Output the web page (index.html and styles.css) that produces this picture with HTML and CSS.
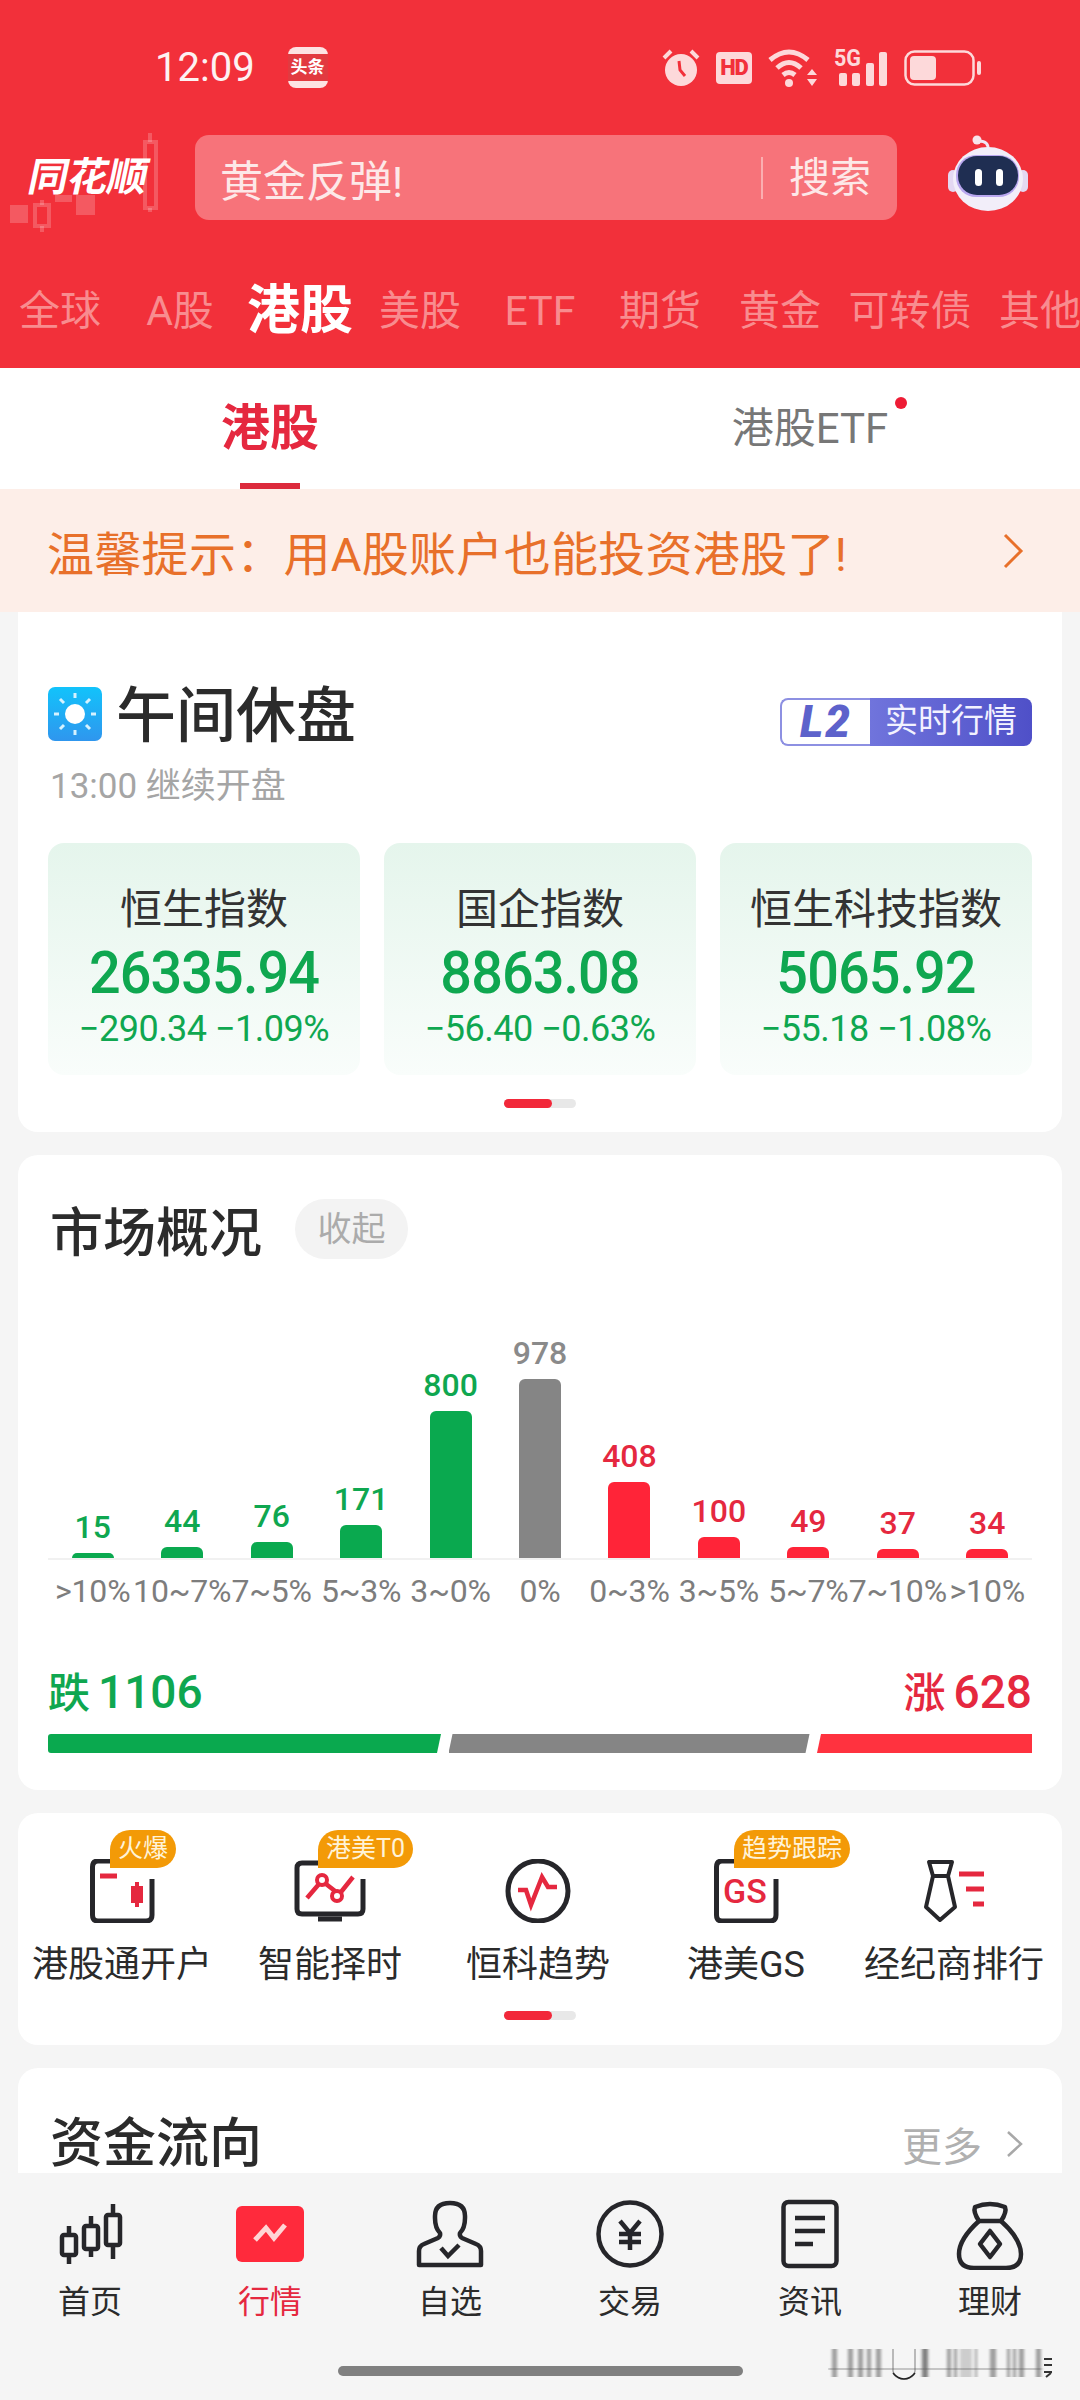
FILE: index.html
```html
<!DOCTYPE html>
<html lang="zh-CN">
<head>
    <meta charset="UTF-8">
    <meta name="viewport" content="width=device-width, initial-scale=1.0">
    <title>同花顺 港股行情</title>
    <link rel="stylesheet" href="styles.css">
</head>
<body>
    <header class="top">
        <div class="status">
            <div class="status-left">
                <span class="clock">12:09</span>
                <span class="toutiao"><span>头条</span></span>
            </div>
            <div class="status-right">
                <svg width="38" height="38" viewBox="0 0 38 38"><path d="M2 9 9 2M36 9 29 2" stroke="#fdd9da" stroke-width="4" fill="none"/><circle cx="19" cy="21" r="16" fill="#fdd9da"/><path d="M17 12 18 21 23 27" stroke="#f2303a" stroke-width="3" fill="none"/></svg>
                <span class="hd">HD</span>
                <svg width="50" height="40" viewBox="0 0 50 40"><path d="M2 12Q21-4 40 12M9 20Q21 9 33 20M15 27Q21 22 27 27" stroke="#fdd9da" stroke-width="5" fill="none"/><circle cx="21" cy="35" r="4" fill="#fdd9da"/><path d="M44 21 49 27H39ZM44 38 39 31H49Z" fill="#fdd9da"/></svg>
                <svg class="signal" width="54" height="38" viewBox="0 0 54 38"><text x="0" y="17" class="fiveg" textLength="27" lengthAdjust="spacingAndGlyphs">5G</text><rect x="5" y="24" width="8" height="13" rx="2" fill="#fdd9da"/><rect x="18" y="24" width="8" height="13" rx="2" fill="#fdd9da"/><rect x="32" y="14" width="8" height="23" rx="2" fill="#fdd9da"/><rect x="45" y="3" width="8" height="34" rx="2" fill="#fdd9da"/></svg>
                <svg width="78" height="36" viewBox="0 0 78 36"><rect x="1.5" y="1.5" width="68" height="33" rx="9" stroke="#fdd9da" stroke-width="2.5" fill="none"/><rect x="6" y="6" width="26" height="24" rx="4" fill="#fdd9da"/><rect x="73" y="11" width="4" height="14" rx="2" fill="#fdd9da"/></svg>
            </div>
        </div>
        <div class="search-row">
            <div class="logo">
                <svg class="logo-bg" width="195" height="110" viewBox="0 0 195 110">
                    <g fill="#fff" fill-opacity=".2">
                        <rect x="10" y="73" width="18" height="18"/>
                        <rect x="55" y="63" width="17" height="7"/>
                        <rect x="76" y="63" width="19" height="20"/>
                    </g>
                    <g stroke="#fff" stroke-opacity=".2" fill="none">
                        <rect x="35" y="73" width="14" height="21" stroke-width="4"/>
                        <path d="M42 68V73M42 94V100" stroke-width="4"/>
                        <rect x="145" y="10" width="11" height="66" stroke-width="4"/>
                        <path d="M150 1V10M150 76V80" stroke-width="4"/>
                    </g>
                </svg>
                <span class="logo-text">同花顺</span>
            </div>
            <div class="search">
                <span class="search-hint">黄金反弹!</span>
                <span class="search-btn">搜索</span>
            </div>
            <svg class="robot" width="80" height="78" viewBox="0 0 80 78">
                <path d="M40 15Q41 6 31 6" stroke="#f0e6f4" stroke-width="3" fill="none"/>
                <circle cx="29" cy="5" r="4.500" fill="#f8e3ea"/>
                <rect x="0" y="35" width="10" height="22" rx="5" fill="#e4d8f2"/>
                <rect x="70" y="35" width="10" height="22" rx="5" fill="#e4d8f2"/>
                <ellipse cx="40" cy="44" rx="35" ry="32" fill="#f2eef9"/>
                <rect x="8" y="20" width="63" height="42" rx="20" fill="#b9a7ef"/>
                <rect x="10" y="21" width="60" height="39" rx="19" fill="#1f2e52"/>
                <rect x="27" y="34" width="7" height="17" rx="3.5" fill="#fff"/>
                <rect x="48" y="34" width="7" height="17" rx="3.5" fill="#fff"/>
            </svg>
        </div>
        <nav class="markets">
            <a>全球</a>
            <a>A股</a>
            <a class="on">港股</a>
            <a>美股</a>
            <a>ETF</a>
            <a>期货</a>
            <a>黄金</a>
            <a class="wide">可转债</a>
            <a>其他</a>
        </nav>
    </header>

    <div class="subtabs">
        <div class="subtab on">港股</div>
        <div class="subtab"><span class="etf">港股ETF<i class="dot"></i></span></div>
    </div>

    <div class="notice">
        <span>温馨提示：用A股账户也能投资港股了!</span>
        <svg width="22" height="36" viewBox="0 0 22 36"><path d="M3 2 19 18 3 34" stroke="#e8702a" stroke-width="3" fill="none"/></svg>
    </div>

    <main class="content">
        <section class="card card-index">
            <div class="title-row">
                <div class="title-left">
                    <svg width="54" height="54" viewBox="0 0 54 54">
                        <defs><linearGradient id="sky" x1="0" y1="0" x2="0" y2="1"><stop offset="0" stop-color="#12c3fb"/><stop offset="1" stop-color="#2f96ee"/></linearGradient></defs>
                        <rect width="54" height="54" rx="7" fill="url(#sky)"/>
                        <circle cx="27" cy="27" r="10" fill="#fff"/>
                        <path d="M27 6V11M27 43V48M6 27H11M43 27H48M12 12 16 16M38 38 42 42M12 42 16 38M38 16 42 12" stroke="#d5f2ff" stroke-width="3"/>
                    </svg>
                    <h1>午间休盘</h1>
                </div>
                <div class="l2"><span class="l2-mark">L2</span><span class="l2-text">实时行情</span></div>
            </div>
            <div class="sub">13:00 继续开盘</div>
            <div class="indexes">
                <div class="index">
                    <div class="index-name">恒生指数</div>
                    <div class="index-val">26335.94</div>
                    <div class="index-chg">−290.34 −1.09%</div>
                </div>
                <div class="index">
                    <div class="index-name">国企指数</div>
                    <div class="index-val">8863.08</div>
                    <div class="index-chg">−56.40 −0.63%</div>
                </div>
                <div class="index">
                    <div class="index-name">恒生科技指数</div>
                    <div class="index-val">5065.92</div>
                    <div class="index-chg">−55.18 −1.08%</div>
                </div>
            </div>
            <div class="pager"><i></i></div>
        </section>

        <section class="card card-market">
            <div class="market-head">
                <h2>市场概况</h2>
                <span class="chip">收起</span>
            </div>
            <div class="chart">
                <div class="col down"><b>15</b><i style="height:5px"></i></div>
                <div class="col down"><b>44</b><i style="height:11px"></i></div>
                <div class="col down"><b>76</b><i style="height:16px"></i></div>
                <div class="col down"><b>171</b><i style="height:33px"></i></div>
                <div class="col down"><b>800</b><i style="height:147px"></i></div>
                <div class="col flat"><b>978</b><i style="height:179px"></i></div>
                <div class="col up"><b>408</b><i style="height:76px"></i></div>
                <div class="col up"><b>100</b><i style="height:21px"></i></div>
                <div class="col up"><b>49</b><i style="height:11px"></i></div>
                <div class="col up"><b>37</b><i style="height:9px"></i></div>
                <div class="col up"><b>34</b><i style="height:9px"></i></div>
            </div>
            <div class="axis">
                <span>&gt;10%</span><span>10~7%</span><span>7~5%</span><span>5~3%</span><span>3~0%</span><span>0%</span><span>0~3%</span><span>3~5%</span><span>5~7%</span><span>7~10%</span><span>&gt;10%</span>
            </div>
            <div class="totals">
                <span class="fall">跌<b>1106</b></span>
                <span class="rise">涨<b>628</b></span>
            </div>
            <div class="ratio">
                <i class="r-fall"></i><i class="r-flat"></i><i class="r-rise"></i>
            </div>
        </section>

        <section class="card card-tools">
            <div class="tools">
                <div class="tool">
                    <div class="tool-icon">
                        <svg width="72" height="64" viewBox="0 0 72 64"><path d="M25 2H12Q6.500 2 6.500 8V56Q6.500 62 12 62H60Q66 62 66 56V20" stroke="#26262a" stroke-width="5" fill="none"/><path d="M14 17H31" stroke="#e5283f" stroke-width="5"/><path d="M51 23V48" stroke="#e5283f" stroke-width="4"/><rect x="47" y="29" width="8" height="13" stroke="#e5283f" stroke-width="4" fill="none"/></svg>
                        <span class="badge">火爆</span>
                    </div>
                    <span class="tool-name">港股通开户</span>
                </div>
                <div class="tool">
                    <div class="tool-icon">
                        <svg width="72" height="64" viewBox="0 0 72 64"><path d="M24 4H8Q3 4 3 9V50Q3 55 8 55H64Q69 55 69 50V20" stroke="#26262a" stroke-width="5" fill="none"/><path d="M24 60H48" stroke="#26262a" stroke-width="5"/><path d="M13 39 25 25M32 25 41 32M47 33 59 18" stroke="#e5283f" stroke-width="4.500" fill="none"/><circle cx="28" cy="21" r="5" stroke="#e5283f" stroke-width="4" fill="none"/><circle cx="43" cy="37" r="5" stroke="#e5283f" stroke-width="4" fill="none"/></svg>
                        <span class="badge">港美T0</span>
                    </div>
                    <span class="tool-name">智能择时</span>
                </div>
                <div class="tool">
                    <div class="tool-icon">
                        <svg width="72" height="64" viewBox="0 0 72 64"><circle cx="36" cy="32" r="30" stroke="#26262a" stroke-width="5" fill="none"/><path d="M16 31H24L29 46 40 18 46 28H55" stroke="#e5283f" stroke-width="4.500" fill="none"/></svg>
                    </div>
                    <span class="tool-name">恒科趋势</span>
                </div>
                <div class="tool">
                    <div class="tool-icon">
                        <svg width="72" height="64" viewBox="0 0 72 64"><path d="M25 2H12Q6.500 2 6.500 8V56Q6.500 62 12 62H60Q66 62 66 56V20" stroke="#26262a" stroke-width="5" fill="none"/><text x="13" y="44" class="gs">GS</text></svg>
                        <span class="badge">趋势跟踪</span>
                    </div>
                    <span class="tool-name">港美GS</span>
                </div>
                <div class="tool">
                    <div class="tool-icon">
                        <svg width="72" height="64" viewBox="0 0 72 64"><g transform="translate(5 0)"><path d="M6 3H29L25 17H10ZM10 17 3 48 17 61 32 48 25 17" stroke="#26262a" stroke-width="4" stroke-linejoin="round" fill="none"/><path d="M36 15H61M43 30H61M50 45H61" stroke="#e5283f" stroke-width="5"/></g></svg>
                    </div>
                    <span class="tool-name">经纪商排行</span>
                </div>
            </div>
            <div class="pager"><i></i></div>
        </section>

        <section class="card card-flow">
            <h2>资金流向</h2>
            <span class="more">更多
                <svg width="18" height="28" viewBox="0 0 18 28"><path d="M2 2 15 14 2 26" stroke="#a8a8a8" stroke-width="2.500" fill="none"/></svg>
            </span>
        </section>
    </main>

    <footer class="bottom">
        <div class="tabs">
            <div class="tab">
                <svg width="72" height="72" viewBox="0 0 72 72"><g stroke="#26262a" stroke-width="4.500" fill="none"><rect x="8" y="37" width="14" height="20" rx="2"/><path d="M15 28V37M15 57V66"/><rect x="30" y="28" width="14" height="23" rx="2"/><path d="M37 18V28M37 51V59"/><rect x="52" y="17" width="14" height="30" rx="2"/><path d="M59 6V17M59 47V61"/></g></svg>
                <span>首页</span>
            </div>
            <div class="tab on">
                <svg width="72" height="72" viewBox="0 0 72 72"><rect x="2" y="8" width="68" height="56" rx="6" fill="#ff2a3c"/><path d="M21 42 32 30 40 40 51 27" stroke="#ffd5d5" stroke-width="5" fill="none"/></svg>
                <span>行情</span>
            </div>
            <div class="tab">
                <svg width="72" height="72" viewBox="0 0 72 72"><path d="M5 67V53Q5 48 10 46L24 40Q27 38 26 35Q21 30 21 20V18Q21 5 36 5Q51 5 51 18V20Q51 30 46 35Q45 38 48 40L62 46Q67 48 67 53V67Z" stroke="#26262a" stroke-width="4.500" stroke-linejoin="round" fill="none"/><path d="M27 50 34 58 45 47" stroke="#26262a" stroke-width="4.500" fill="none"/></svg>
                <span>自选</span>
            </div>
            <div class="tab">
                <svg width="72" height="72" viewBox="0 0 72 72"><circle cx="36" cy="36" r="31.500" stroke="#26262a" stroke-width="4.500" fill="none"/><path d="M26 23 36 35 46 23M25 36H47M25 44H47M36 35V52" stroke="#26262a" stroke-width="4.500" fill="none"/></svg>
                <span>交易</span>
            </div>
            <div class="tab">
                <svg width="72" height="72" viewBox="0 0 72 72"><rect x="9.500" y="4" width="53" height="64" rx="5" stroke="#26262a" stroke-width="4.500" fill="none"/><path d="M21 20H51M21 33H51M21 46H39" stroke="#26262a" stroke-width="4.500" fill="none"/></svg>
                <span>资讯</span>
            </div>
            <div class="tab">
                <svg width="72" height="72" viewBox="0 0 72 72"><g stroke="#26262a" stroke-width="4.500" fill="none" stroke-linejoin="round"><path d="M21 9Q36 3 51 9Q53 14 47 23H25Q19 14 21 9Z"/><path d="M25 23Q5 41 5 56Q5 70 20 70H52Q67 70 67 56Q67 41 47 23"/><path d="M36 33 46 46 36 59 26 46Z"/></g></svg>
                <span>理财</span>
            </div>
        </div>
        <div class="homebar"></div>
        <svg class="mark" width="240" height="40" viewBox="0 0 240 40">
            <defs><filter id="soft"><feGaussianBlur stdDeviation="1.400 .4"/></filter></defs>
            <g fill="#555" fill-opacity=".55" filter="url(#soft)">
                <rect x="4" y="8" width="5" height="28"/><rect x="20" y="8" width="5" height="28"/><rect x="30" y="8" width="5" height="28"/><rect x="39" y="8" width="4" height="28"/><rect x="48" y="8" width="5" height="28"/><rect x="94" y="8" width="6" height="28" fill="#222"/><rect x="119" y="8" width="4" height="28"/><rect x="126" y="8" width="3" height="28"/><rect x="132" y="8" width="12" height="28" fill-opacity=".25"/><rect x="147" y="8" width="2" height="28"/><rect x="162" y="8" width="6" height="28"/><rect x="179" y="8" width="3" height="28"/><rect x="185" y="8" width="3" height="28"/><rect x="191" y="8" width="5" height="28"/><rect x="208" y="8" width="5" height="28"/>
                <rect x="0" y="27" width="214" height="2" fill-opacity=".3"/>
            </g>
            <path d="M65 8V30Q66 38 76 38Q86 38 87 30V8" stroke="#555" stroke-opacity=".5" stroke-width="1.500" fill="none"/>
            <path d="M65 32Q70 38 76 38Q82 38 87 32" stroke="#222" stroke-width="1.500" fill="none"/>
            <path d="M216 18H224M216 24H224M216 31H224M218 36 223 32" stroke="#333" stroke-width="2"/>
        </svg>
    </footer>
</body>
</html>
```

FILE: styles.css
```css
* {
    box-sizing: border-box;
}
body {
    width: 1080px;
    height: 2400px;
    margin: 0;
    display: flex;
    flex-direction: column;
    overflow: hidden;
    background: #f5f5f5;
    color: #2b2b2b;
    font-family: Roboto, "Noto Sans CJK SC", sans-serif;
}
h1, h2 {
    margin: 0;
    font-weight: 500;
}

/* red header */
.top {
    height: 368px;
    flex: none;
    background: #f2303a;
    color: #fff;
}
.status {
    height: 135px;
    padding: 0 98px 0 155px;
    display: flex;
    justify-content: space-between;
    align-items: center;
}
.status-left {
    display: flex;
    align-items: center;
    gap: 33px;
}
.clock {
    font-size: 40px;
    color: #fdf2f2;
}
.toutiao {
    width: 40px;
    height: 41px;
    display: flex;
    align-items: center;
    justify-content: center;
    background: #fde3e3;
    border-radius: 8px;
}
.toutiao span {
    width: 40px;
    height: 27px;
    background: #e23a40;
    font-size: 17px;
    font-weight: 700;
    line-height: 27px;
    text-align: center;
}
.status-right {
    display: flex;
    align-items: center;
    gap: 16px;
}
.signal {
    overflow: visible;
}
.hd {
    width: 36px;
    height: 32px;
    background: #fdd9da;
    border-radius: 4px;
    color: #f2303a;
    font-size: 22px;
    font-weight: 900;
    line-height: 32px;
    letter-spacing: -1px;
    text-align: center;
}
.fiveg {
    font-family: Roboto, sans-serif;
    font-size: 23px;
    font-weight: 700;
    fill: #fdd9da;
}
.search-row {
    height: 85px;
    display: flex;
    align-items: center;
}
.logo {
    position: relative;
    width: 195px;
    height: 85px;
    flex: none;
}
.logo-bg {
    position: absolute;
    left: 0;
    top: -3px;
}
.logo-text {
    position: absolute;
    left: 29px;
    top: 18px;
    font-size: 40px;
    font-weight: 700;
    line-height: 50px;
    transform: skewX(-12deg);
    letter-spacing: -.5px;
}
.search {
    width: 702px;
    height: 85px;
    display: flex;
    justify-content: space-between;
    align-items: center;
    padding: 0 26px 0 25px;
    background: #f7737a;
    border-radius: 14px;
    color: #fde8e8;
}
.search-hint {
    font-size: 43px;
}
.search-btn {
    padding-left: 26px;
    border-left: 2px solid #fbaeb0;
    font-size: 41px;
    line-height: 42px;
}
.robot {
    align-self: flex-start;
    margin: 0 0 0 51px;
}
.markets {
    height: 148px;
    padding-top: 66px;
    display: flex;
    align-items: flex-start;
    white-space: nowrap;
}
.markets a {
    flex: none;
    width: 120px;
    font-size: 41px;
    line-height: 50px;
    text-align: center;
    color: #f88c8f;
}
.markets a.wide {
    width: 140px;
}
.markets a.on {
    font-size: 53px;
    font-weight: 700;
    color: #fff;
}

/* sub tabs */
.subtabs {
    height: 121px;
    flex: none;
    display: flex;
    background: #fff;
}
.subtab {
    position: relative;
    width: 540px;
    padding-top: 36px;
    text-align: center;
    font-size: 42px;
    line-height: 50px;
    color: #777;
}
.subtab.on {
    font-size: 49px;
    font-weight: 700;
    color: #e5283f;
}
.subtab.on::after {
    content: "";
    position: absolute;
    left: 240px;
    bottom: 0;
    width: 60px;
    height: 6px;
    background: #dc2a3c;
}
.etf {
    position: relative;
}
.dot {
    position: absolute;
    right: -19px;
    top: -7px;
    width: 12px;
    height: 12px;
    border-radius: 50%;
    background: #ee1c35;
}

/* notice */
.notice {
    height: 123px;
    flex: none;
    padding: 0 56px 0 47px;
    display: flex;
    justify-content: space-between;
    align-items: center;
    background: #fdeee8;
    color: #e8702a;
    font-size: 47px;
    letter-spacing: .3px;
}

/* cards */
.content {
    flex: 1;
    min-height: 0;
    overflow: hidden;
    padding: 0 18px;
}
.card {
    margin-bottom: 23px;
    background: #fff;
    border-radius: 20px;
}
.card-index {
    padding: 73px 30px 24px;
    border-radius: 0 0 20px 20px;
}
.title-row {
    height: 58px;
    display: flex;
    justify-content: space-between;
    align-items: flex-start;
}
.title-left {
    display: flex;
    align-items: center;
    gap: 14px;
    height: 58px;
}
.title-left h1 {
    padding-top: 5px;
    font-size: 60px;
    line-height: 58px;
}
.l2 {
    width: 252px;
    height: 48px;
    margin-top: 13px;
    display: flex;
}
.l2-mark {
    width: 90px;
    background: #fff;
    border: 2px solid #8d90e2;
    border-right: 0;
    border-radius: 8px 0 0 8px;
    color: #5d62cb;
    font-size: 44px;
    font-weight: 900;
    font-style: italic;
    letter-spacing: 2px;
    line-height: 44px;
    text-align: center;
}
.l2-text {
    flex: 1;
    border-radius: 0 8px 8px 0;
    background: linear-gradient(90deg, #7074dc, #4f50c8);
    color: #f2f2ff;
    font-size: 33px;
    line-height: 46px;
    text-align: center;
}
.sub {
    margin-top: 24px;
    padding-left: 2px;
    font-size: 35px;
    line-height: 40px;
    color: #a5a5a5;
}
.indexes {
    margin-top: 36px;
    display: flex;
    gap: 24px;
}
.index {
    width: 312px;
    height: 232px;
    padding-top: 42px;
    border-radius: 16px;
    background: linear-gradient(#e5f5ec, #f9fdfb);
    text-align: center;
}
.index-name {
    font-size: 42px;
    line-height: 50px;
    color: #333;
}
.index-val {
    margin-top: 8px;
    font-size: 60px;
    font-weight: 500;
    line-height: 60px;
    letter-spacing: -1px;
    color: #0fa750;
    transform: scaleX(.93);
}
.index-chg {
    margin-top: 6px;
    font-size: 36px;
    line-height: 40px;
    letter-spacing: -.5px;
    color: #0fa750;
}
.pager {
    width: 72px;
    height: 9px;
    margin: 24px auto 0;
    border-radius: 5px;
    background: #e8e8e8;
}
.pager i {
    display: block;
    width: 48px;
    height: 9px;
    border-radius: 5px;
    background: #f2283a;
}

/* market overview */
.card-market {
    padding: 44px 30px 37px;
}
.market-head {
    height: 60px;
    display: flex;
    align-items: center;
    gap: 33px;
}
.market-head h2 {
    font-size: 53px;
    padding-left: 2px;
}
.chip {
    width: 113px;
    height: 60px;
    border-radius: 30px;
    background: #f3f3f3;
    color: #ababab;
    font-size: 34px;
    line-height: 60px;
    text-align: center;
}
.chart {
    height: 230px;
    margin-top: 71px;
    display: flex;
    align-items: flex-end;
    border-bottom: 2px solid #f1f1f1;
}
.col {
    flex: 1;
    display: flex;
    flex-direction: column;
    align-items: center;
}
.col b {
    margin-bottom: 8px;
    font-size: 32px;
    font-weight: 500;
    line-height: 36px;
}
.col i {
    width: 42px;
    border-radius: 6px 6px 0 0;
}
.down b { color: #0fa750; }
.down i { background: #0aa94f; }
.flat b { color: #8a8a8a; }
.flat i { background: #858585; }
.up b { color: #e5283f; }
.up i { background: #ff2438; }
.axis {
    margin-top: 13px;
    display: flex;
}
.axis span {
    flex: 1 1 0;
    width: 0;
    display: flex;
    justify-content: center;
    white-space: nowrap;
    font-size: 32px;
    line-height: 36px;
    letter-spacing: -.2px;
    color: #7d7d7d;
}
.totals {
    margin-top: 55px;
    height: 50px;
    display: flex;
    justify-content: space-between;
    align-items: center;
    font-size: 42px;
    font-weight: 500;
}
.totals b {
    margin-left: 8px;
    font-size: 46px;
    font-weight: 500;
}
.fall { color: #0fa750; }
.rise { color: #e5283f; }
.ratio {
    margin-top: 20px;
    height: 19px;
    display: flex;
    gap: 7.5px;
}
.r-fall {
    flex: 393;
    background: #0aa94f;
    border-radius: 3px 0 0 3px;
    clip-path: polygon(0 0, 100% 0, calc(100% - 4px) 100%, 0 100%);
}
.r-flat {
    flex: 361;
    background: #858585;
    clip-path: polygon(4px 0, 100% 0, calc(100% - 4px) 100%, 0 100%);
}
.r-rise {
    flex: 215;
    background: #ff323f;
    clip-path: polygon(4px 0, 100% 0, 100% 100%, 0 100%);
}

/* tool grid */
.card-tools {
    padding: 46px 0 25px;
}
.tools {
    display: flex;
    padding-right: 4px;
}
.tool {
    flex: 1;
    display: flex;
    flex-direction: column;
    align-items: center;
}
.tool-icon {
    position: relative;
    width: 72px;
    height: 64px;
}
.tool-icon svg {
    display: block;
}
.gs {
    font-family: Roboto, sans-serif;
    font-size: 34px;
    font-weight: 500;
    fill: #e5283f;
}
.badge {
    position: absolute;
    left: 24px;
    top: -29px;
    height: 38px;
    padding: 0 8px;
    border-radius: 20px 19px 19px 0;
    background: #f39a07;
    color: #fff3d8;
    font-size: 25px;
    line-height: 38px;
    white-space: nowrap;
}
.tool-name {
    margin-top: 20px;
    font-size: 36px;
    line-height: 44px;
    white-space: nowrap;
}

/* fund flow, cut off by the tab bar */
.card-flow {
    height: 200px;
    padding: 50px 30px 0;
    display: flex;
    justify-content: space-between;
    border-radius: 20px 20px 0 0;
}
.card-flow h2 {
    padding-left: 2px;
    font-size: 53px;
    line-height: 52px;
}
.more {
    height: 52px;
    display: flex;
    align-items: center;
    gap: 24px;
    padding-right: 8px;
    font-size: 40px;
    color: #b0b0b0;
}

/* bottom tabs */
.bottom {
    position: relative;
    height: 227px;
    flex: none;
    padding-top: 25px;
    background: #f5f5f5;
}
.tabs {
    display: flex;
}
.tab {
    width: 180px;
    display: flex;
    flex-direction: column;
    align-items: center;
    gap: 12px;
    font-size: 32px;
    line-height: 40px;
}
.tab.on span {
    color: #e5283f;
}
.homebar {
    width: 405px;
    height: 10px;
    margin: 44px auto 0;
    border-radius: 5px;
    background: #808080;
}
.mark {
    position: absolute;
    left: 828px;
    top: 168px;
}
```
